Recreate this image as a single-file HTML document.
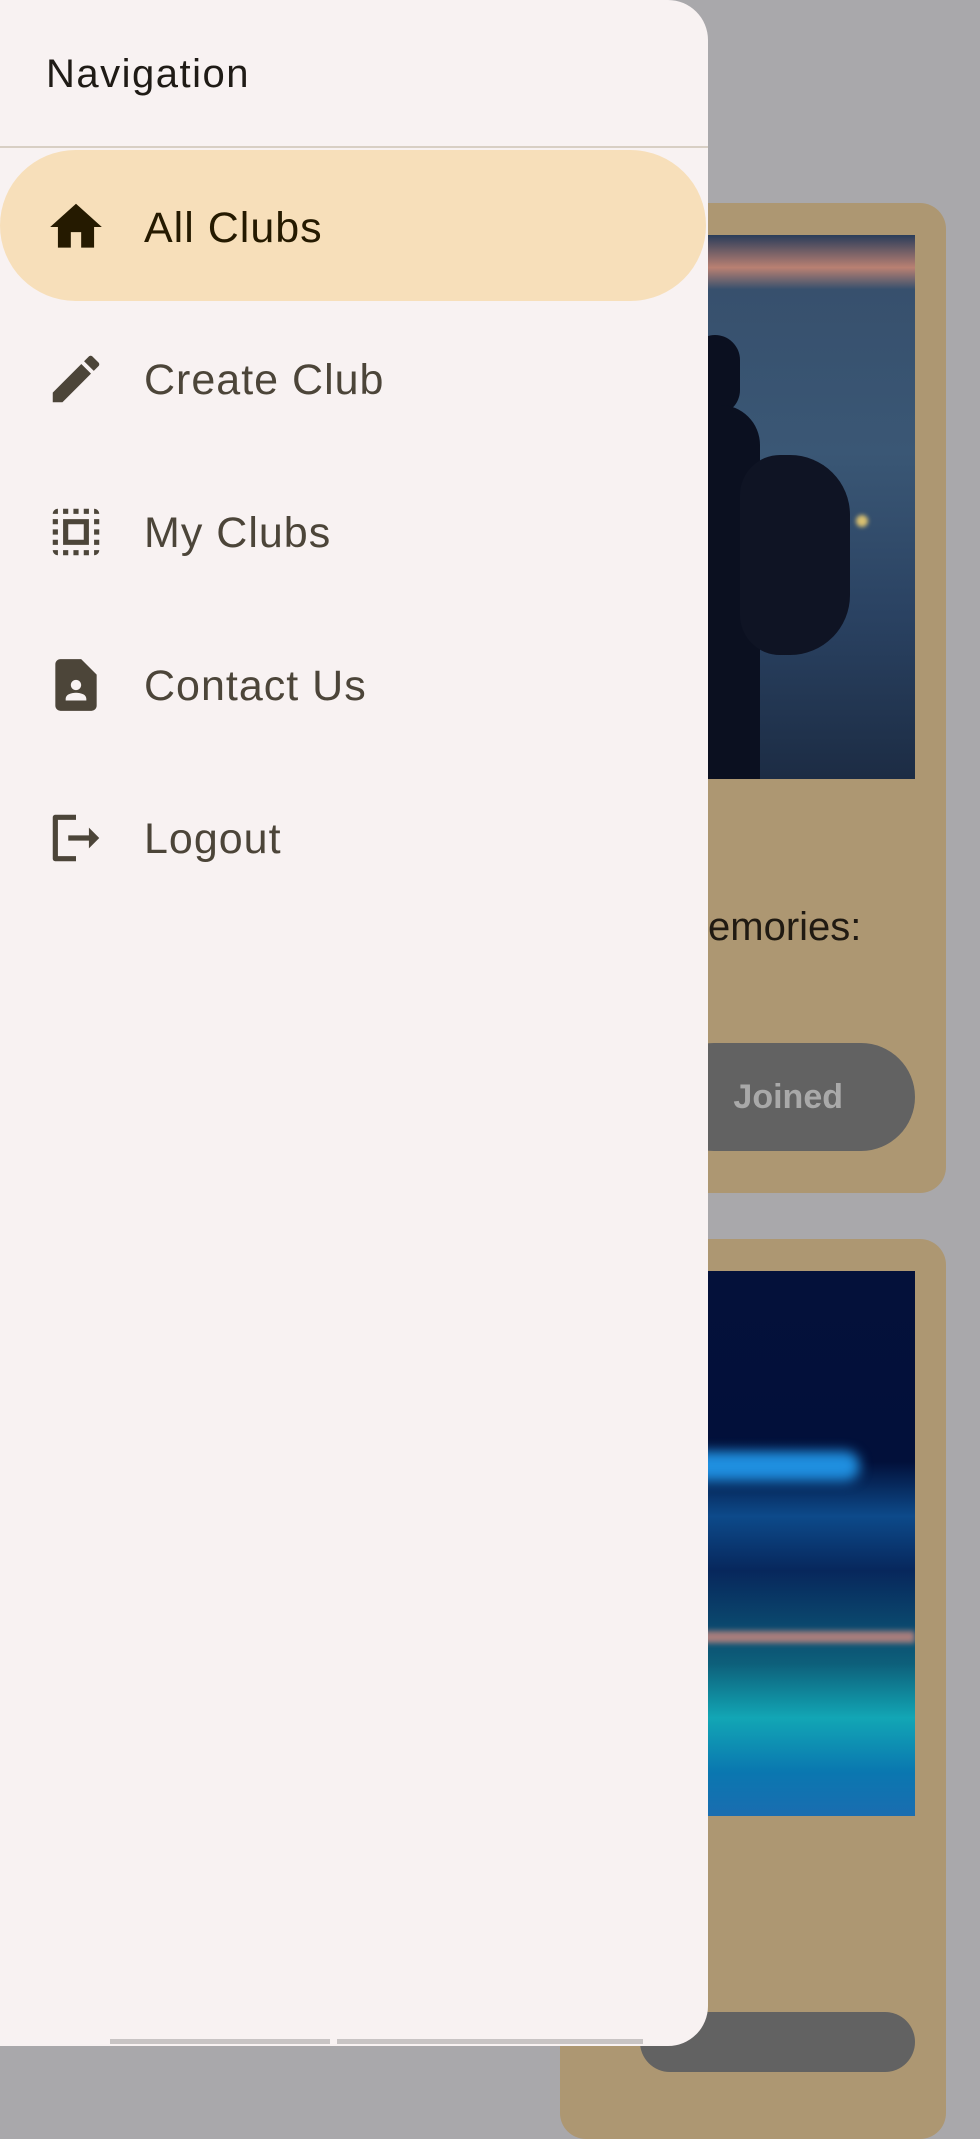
<!DOCTYPE html>
<html><head><meta charset="utf-8"><style>
*{margin:0;padding:0;box-sizing:border-box}
body{width:980px;height:2048px;overflow:hidden;background:#a9a8ab;position:relative;font-family:"Liberation Sans",Roboto,sans-serif}
.card{position:absolute;left:560px;width:386px;background:#ad9772;border-radius:26px}
.img{position:absolute;left:600px;width:315px;overflow:hidden}
.drawer{position:absolute;left:0;top:0;width:708px;height:2046px;background:#f8f2f2;border-radius:0 40px 40px 0}
.nav{position:absolute;left:46px;top:52px;font-size:40px;letter-spacing:1.5px;color:#1f1b16}
.div{position:absolute;left:0;top:146px;width:708px;height:2px;background:#d8cfc4}
.pill{position:absolute;left:0;top:150px;width:706px;height:151px;background:#f7dfba;border-radius:76px}
.item{position:absolute;left:0;width:700px;height:60px}
.item svg{position:absolute;left:45px;top:-1px;width:62px;height:62px}
.item span{position:absolute;left:144px;top:5px;font-size:43px;letter-spacing:1px;color:#4c4539;line-height:52px}
</style></head><body>
<div class="card" style="top:203px;height:990px"></div>
<div class="img" style="top:235px;height:544px;background:linear-gradient(180deg,#2a3d5a 0%,#b98072 6%,#37506d 10%,#3a5775 40%,#2a4262 70%,#1c2c44 100%)">
<div style="position:absolute;left:90px;top:100px;width:50px;height:80px;border-radius:25px;background:#0b1020"></div>
<div style="position:absolute;left:60px;top:170px;width:100px;height:380px;border-radius:40px 40px 0 0;background:#0b1020"></div>
<div style="position:absolute;left:140px;top:220px;width:110px;height:200px;border-radius:40px 60px 60px 40px;background:#0f1424"></div>
<div style="position:absolute;left:256px;top:280px;width:12px;height:12px;border-radius:6px;background:#d9c070;filter:blur(2px)"></div>
</div>
<div style="position:absolute;left:708px;top:905px;font-size:40px;color:#201a12">emories:</div>
<div style="position:absolute;left:660px;top:1043px;width:255px;height:108px;border-radius:54px;background:#626262;color:#a9a9a9;font-weight:bold;font-size:34px;line-height:108px;text-align:right;padding-right:72px">Joined</div>
<div class="card" style="top:1239px;height:900px"></div>
<div class="img" style="top:1271px;height:545px;background:linear-gradient(180deg,#04113a 0%,#02103a 35%,#0d4a8a 45%,#07275c 55%,#0d5f7a 72%,#12a6b5 82%,#0a77b0 92%,#1a6db0 100%)">
<div style="position:absolute;left:70px;top:180px;width:190px;height:30px;border-radius:15px;background:#1f8fe0;filter:blur(6px)"></div>
<div style="position:absolute;left:0;top:360px;width:315px;height:12px;background:#d08a80;filter:blur(3px);opacity:.8"></div>
</div>
<div style="position:absolute;left:640px;top:2012px;width:275px;height:60px;border-radius:40px;background:#626262"></div>
<div class="drawer">
<div class="nav">Navigation</div>
<div class="div"></div>
<div class="pill"></div>
<div class="item" style="top:197px"><svg viewBox="0 0 24 24"><path fill="#251a00" d="M10 20v-6h4v6h5v-8h3L12 3 2 12h3v8z"/></svg><span style="color:#251a00">All Clubs</span></div>
<div class="item" style="top:349px"><svg viewBox="0 0 24 24"><path fill="#4c4539" d="M3 17.25V21h3.75L17.81 9.94l-3.75-3.75L3 17.25zM20.71 7.04c.39-.39.39-1.02 0-1.41l-2.34-2.34c-.39-.39-1.02-.39-1.41 0l-1.83 1.83 3.75 3.75 1.83-1.83z"/></svg><span>Create Club</span></div>
<div class="item" style="top:502px"><svg viewBox="0 0 24 24"><path fill="#4c4539" d="M3 5h2V3c-1.1 0-2 .9-2 2zm0 8h2v-2H3v2zm4 8h2v-2H7v2zM3 9h2V7H3v2zm10-6h-2v2h2V3zm6 0v2h2c0-1.1-.9-2-2-2zM5 21v-2H3c0 1.1.9 2 2 2zm-2-4h2v-2H3v2zM9 3H7v2h2V3zm2 18h2v-2h-2v2zm8-8h2v-2h-2v2zm0 8c1.1 0 2-.9 2-2h-2v2zm0-12h2V7h-2v2zm0 8h2v-2h-2v2zm-4 4h2v-2h-2v2zm0-16h2V3h-2v2zM7 17h10V7H7v10zm2-8h6v6H9V9z"/></svg><span>My Clubs</span></div>
<div class="item" style="top:655px"><svg viewBox="0 0 24 24"><path fill="#4c4539" d="M14 2H6c-1.1 0-2 .9-2 2v16c0 1.1.9 2 2 2h12c1.1 0 2-.9 2-2V8l-6-6zm-2 8c1.1 0 2 .9 2 2s-.9 2-2 2-2-.9-2-2 .9-2 2-2zm4 8H8v-.57c0-.81.48-1.53 1.22-1.85.85-.37 1.79-.58 2.78-.58s1.93.21 2.78.58c.74.32 1.22 1.04 1.22 1.85V18z"/></svg><span>Contact Us</span></div>
<div class="item" style="top:808px"><svg viewBox="0 0 24 24"><path fill="#4c4539" d="M5 5h7V3H4c-.55 0-1 .45-1 1v16c0 .55.45 1 1 1h8v-2H5V5zm16 7l-4-4v3H9v2h8v3l4-4z"/></svg><span>Logout</span></div>
</div>
<div style="position:absolute;left:110px;top:2039px;width:220px;height:5px;background:#c8c4c4"></div>
<div style="position:absolute;left:337px;top:2039px;width:306px;height:5px;background:#c8c4c4"></div>
</body></html>
